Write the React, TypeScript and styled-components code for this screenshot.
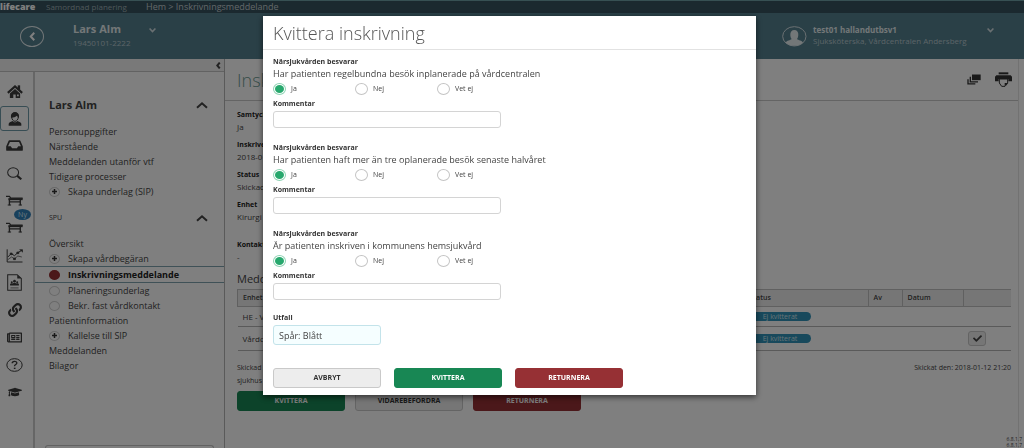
import React from "react";
import styled, { createGlobalStyle, css } from "styled-components";
import { FaLink, FaRegNewspaper, FaGraduationCap, FaCheck } from "react-icons/fa";

const GlobalStyle = createGlobalStyle`
  *, *::before, *::after { box-sizing: border-box; }
  body {
    margin: 0;
    background: #fff;
    color: #444;
    font-family: "Open Sans", "Noto Sans", sans-serif;
    font-size: 8px;
    line-height: 12px;
  }
  button, input { font: inherit; color: inherit; }
  a { color: inherit; text-decoration: none; }
  ul, h1, h2, p, dl, dd { margin: 0; padding: 0; list-style: none; }
`;

const Page = styled.div`
  min-height: 100vh;
  display: flex;
  flex-direction: column;
`;

const TopBar = styled.div`
  display: flex;
  align-items: center;
  height: 13px;
  border-top: 1px solid #6fa0a6;
  background: #36525e;
  color: #c4ced2;
  overflow: hidden;
`;

const Logo = styled.strong`
  width: 46px;
  color: #fff;
  font-size: 9px;
  font-weight: 800;
`;

const Product = styled.span`
  width: 100px;
  color: #9fb0b6;
`;

const Breadcrumb = styled.span`
  font-size: 9px;
`;

const Header = styled.header`
  display: flex;
  align-items: center;
  height: 46px;
  padding: 0 30px 0 20px;
  background: #54808f;
  color: #d5e0e4;
`;

const BackButton = styled.button`
  display: grid;
  place-items: center;
  width: 24px;
  height: 21px;
  margin-right: 29px;
  padding: 0;
  border: 1px solid #e6eef0;
  border-radius: 50%;
  background: none;
  color: #fff;
`;

const Identity = styled.div<{ $large?: boolean }>`
  min-width: ${(p) => (p.$large ? "62px" : "160px")};
  line-height: ${(p) => (p.$large ? "14px" : "11px")};
  color: #b9c9cf;
  strong {
    display: block;
    color: #e6eef0;
    font-size: ${(p) => (p.$large ? "11px" : "8px")};
  }
`;

const HeaderToggle = styled.button`
  display: flex;
  height: 12px;
  margin: 0 0 6px 14px;
  padding: 0;
  border: 0;
  background: none;
  color: #d5e0e4;
`;

const UserBlock = styled.div`
  display: flex;
  align-items: center;
  margin-left: auto;
  > svg { margin-right: 6px; }
  ${Identity} { margin-top: -3px; }
`;

const Body = styled.div`
  flex: 1;
  display: flex;
`;

const SidePanel = styled.aside`
  display: flex;
  flex-direction: column;
  width: 225px;
  border-right: 1px solid #b5b5b5;
`;

const CollapseBar = styled.div`
  display: flex;
  justify-content: flex-end;
  align-items: center;
  height: 13px;
  padding-right: 3px;
  border-bottom: 1px solid #c4c4c4;
  background: #f2f2f2;
`;

const PlainButton = styled.button`
  display: flex;
  padding: 0;
  border: 0;
  background: none;
`;

const SideColumns = styled.div`
  flex: 1;
  display: flex;
`;

const Rail = styled.ul`
  width: 35px;
  padding-top: 6px !important;
  border-right: 2px solid #cdcdcd;
`;

const RailItem = styled.li<{ $active?: boolean }>`
  position: relative;
  height: 27px;
  padding: 1px 0;
  &:nth-child(3n) { margin-bottom: 1px; }
  a {
    display: grid;
    place-items: center;
    width: 29px;
    height: 25px;
    border: 1px solid transparent;
    border-radius: 3px;
    color: #3c3c3c;
    ${(p) => p.$active && css`border-color: #6f9aa8;`}
  }
`;

const NewBadge = styled.span`
  position: absolute;
  top: -5px;
  left: 14px;
  width: 17px;
  border-radius: 50%;
  background: #3080b8;
  color: #dceefa;
  font-size: 7px;
  line-height: 11px;
  text-align: center;
`;

const Nav = styled.nav`
  flex: 1;
  display: flex;
  flex-direction: column;
  padding-top: 24px;
  font-size: 9px;
`;

const NavHeading = styled.div<{ $minor?: boolean }>`
  display: flex;
  align-items: center;
  justify-content: space-between;
  height: 18px;
  margin: ${(p) => (p.$minor ? "10px 16px 9px 14px" : "0 16px 10px 14px")};
  font-size: ${(p) => (p.$minor ? "7px" : "11px")};
  h2 { font-size: inherit; font-weight: ${(p) => (p.$minor ? 400 : 700)}; }
`;

const NavLink = styled.a<{ $active?: boolean }>`
  display: flex;
  align-items: center;
  height: 15px;
  padding-left: 14px;
  ${(p) =>
    p.$active &&
    css`
      height: 17px;
      border: solid #7fa2ae;
      border-width: 1px 0;
      font-weight: 700;
      color: #222;
    `}
`;

const Marker = styled.span<{ $kind: "add" | "done" | "empty" }>`
  display: grid;
  place-items: center;
  width: 11px;
  height: 10px;
  margin-right: 8px;
  border: 1px solid ${(p) => (p.$kind === "done" ? "#963034" : "#d2d2d2")};
  border-radius: 50%;
  background: ${(p) => (p.$kind === "done" ? "#963034" : "none")};
`;

const SideBox = styled.div`
  height: 3px;
  margin: auto 10px 0;
  border: 1px solid #c4c4c4;
  border-bottom: 0;
  border-radius: 3px 3px 0 0;
`;

const Main = styled.main`
  flex: 1;
  display: flex;
  flex-direction: column;
  margin-right: 5px;
  border-right: 1px solid #e4e4e4;
`;

const TitleRow = styled.div`
  display: flex;
  align-items: center;
  height: 42px;
  padding: 0 6px 0 12px;
  border-bottom: 1px solid #c8c8c8;
  h1 {
    flex: 1;
    color: #6d9a92;
    font-size: 18px;
    font-weight: 300;
  }
`;

const Tools = styled.div`
  display: flex;
  align-items: center;
  gap: 14px;
  color: #333;
`;

const Content = styled.div`
  padding: 8px 7px 0 12px;
`;

const Facts = styled.dl`
  dt { font-weight: 700; color: #222; font-size: 7px; }
  dd { height: 18px; }
  dd.spaced { height: 28px; }
`;

const SectionTitle = styled.h2`
  margin: 2px 0;
  font-size: 11px;
  font-weight: 400;
  line-height: 16px;
`;

const Table = styled.table`
  width: 100%;
  table-layout: fixed;
  border-collapse: collapse;
  font-size: 8px;
  th {
    height: 17px;
    padding: 0 5px;
    border: solid #c0c0c0;
    border-width: 1px 0 1px 1px;
    background: #ededed;
    font-size: 7px;
    font-weight: 600;
    text-align: left;
  }
  td {
    padding: 0 5px;
    border-bottom: 1px solid #b5b5b5;
    white-space: nowrap;
  }
`;

const Row = styled.tr<{ $tall?: boolean }>`
  height: ${(p) => (p.$tall ? 24 : 20)}px;
`;

const Pill = styled.span`
  display: block;
  width: 62px;
  border-radius: 5px;
  background: #3092b8;
  color: #cfe6ee;
  font-size: 7px;
  line-height: 9px;
  text-align: center;
`;

const CheckButton = styled.button`
  display: grid;
  place-items: center;
  width: 18px;
  height: 15px;
  padding: 0;
  border: 1px solid #c8c8c8;
  border-radius: 3px;
  background: #ededed;
`;

const SentNote = styled.div`
  display: flex;
  justify-content: space-between;
  margin: 10px 0 4px;
  font-size: 7px;
  line-height: 13px;
  p:first-child { width: 80px; }
`;

const Actions = styled.div<{ $gap: number }>`
  display: flex;
  gap: ${(p) => p.$gap}px;
`;

const tones = {
  neutral: css`background: #ededed; border-color: #c9c9c9; color: #333;`,
  green: css`background: #188754; border-color: #188754; color: #fff;`,
  red: css`background: #963034; border-color: #963034; color: #fff;`,
};

const Button = styled.button<{ $tone: keyof typeof tones }>`
  width: 108px;
  height: 20px;
  padding: 0;
  border: 1px solid;
  border-radius: 3px;
  font-size: 7px;
  font-weight: 700;
  ${(p) => tones[p.$tone]}
`;

const Version = styled.p`
  margin-top: auto !important;
  margin-right: -4px !important;
  font-size: 5px;
  line-height: 6px;
  text-align: right;
`;

const Overlay = styled.div`
  position: fixed;
  inset: 0;
  display: flex;
  justify-content: center;
  align-items: flex-start;
  padding: 16px 5px 0 0;
  background: rgba(0, 0, 0, 0.5);
`;

const Dialog = styled.div`
  width: 493px;
  background: #fff;
  box-shadow: 0 2px 6px rgba(0, 0, 0, 0.6);
`;

const DialogTitle = styled.h1`
  padding: 0 10px;
  border-bottom: 1px solid #e2e2e2;
  color: #555;
  font-size: 18px;
  font-weight: 300;
  line-height: 34px;
  height: 34px;
`;

const DialogBody = styled.form`
  padding: 6px 10px 7px;
`;

const Question = styled.fieldset`
  min-width: 0;
  margin: 0;
  padding: 0;
  border: 0;
  font-size: 9px;
  legend { padding: 0; }
  & + & { margin-top: 14px; }
`;

const boldLabel = css`
  display: block;
  color: #333;
  font-size: 7px;
  font-weight: 700;
  line-height: 12px;
`;

const Legend = styled.legend`${boldLabel}`;
const FieldLabel = styled.label`${boldLabel}`;

const Options = styled.div`
  display: flex;
  height: 18px;
`;

const Option = styled.label`
  display: flex;
  align-items: center;
  width: 82px;
  font-size: 7px;
`;

const Radio = styled.input`
  appearance: none;
  display: grid;
  place-items: center;
  width: 13px;
  height: 12px;
  margin: 0 5px 0 0;
  border: 1px solid #c4c4c4;
  border-radius: 50%;
  background: #fff;
  &:checked { border-color: #8fd3b4; }
  &:checked::before {
    content: "";
    width: 9px;
    height: 8px;
    border-radius: 50%;
    background: #27a86d;
  }
`;

const TextField = styled.input<{ $result?: boolean }>`
  display: block;
  width: ${(p) => (p.$result ? 108 : 228)}px;
  height: ${(p) => (p.$result ? 20 : 17)}px;
  margin-top: 1px;
  padding: 0 5px;
  border: 1px solid ${(p) => (p.$result ? "#c3e3ea" : "#d4d4d4")};
  border-radius: 3px;
  background: ${(p) => (p.$result ? "#f5feff" : "#fff")};
  font-size: 9px;
`;

const ResultBlock = styled.div`
  margin: 12px 0 23px;
`;

const Chevron = ({ dir, w, h, stroke = 1.6 }: { dir: "up" | "down" | "left"; w: number; h: number; stroke?: number }) => {
  const d = { up: "M1 9 L6 3 L11 9", down: "M1 3 L6 9 L11 3", left: "M9 1 L3 6 L9 11" }[dir];
  return (
    <svg width={w} height={h} viewBox="0 0 12 12" preserveAspectRatio="none" aria-hidden="true">
      <path d={d} fill="none" stroke="currentColor" strokeWidth={stroke} vectorEffect="non-scaling-stroke" />
    </svg>
  );
};

const HomeIcon = () => (
  <svg width="16" height="13" viewBox="0 0 46 38" fill="currentColor">
    <path d="M31 1h7v13h-7z" />
    <path d="M2 23 23 4l21 19" fill="none" stroke="currentColor" strokeWidth="6" />
    <path d="M8 25 23 12l15 13v13H25V28h-7v10H8z" />
    <path d="M29 28h5v5h-5z" fill="#fff" />
  </svg>
);

const PersonIcon = () => (
  <svg width="14" height="14" viewBox="0 0 42 42">
    <path d="M2 41v-6c1-5 8-6 12-8 3 5 11 5 14 0 4 2 11 3 12 8v6z" fill="currentColor" />
    <path d="M11 14c0-7 4-12 10-12s10 5 10 12c0 8-5 14-10 14s-10-6-10-14z" fill="none" stroke="currentColor" strokeWidth="3" />
    <path d="M9 17C8 6 13 1 21 1s13 5 12 16c-3-1-5-4-6-6-4 3-10 6-18 6z" fill="currentColor" />
  </svg>
);

const InboxIcon = () => (
  <svg width="17" height="11" viewBox="0 0 50 32">
    <path d="M10 3h30l7 16v10H3V19z" fill="none" stroke="currentColor" strokeWidth="5" strokeLinejoin="round" />
    <path d="M3 18h11l4 6h14l4-6h11v11H3z" fill="currentColor" />
  </svg>
);

const SearchIcon = () => (
  <svg width="15" height="13" viewBox="0 0 44 38" fill="none" stroke="currentColor">
    <ellipse cx="18" cy="16" rx="16" ry="14" strokeWidth="3" />
    <path d="m30 26 12 10" strokeWidth="6" />
  </svg>
);

const BedIcon = () => (
  <svg width="17" height="11" viewBox="0 0 50 32" fill="none" stroke="currentColor">
    <path d="M0 4h10l4 5h35" strokeWidth="4" />
    <path d="M7 12h42" strokeWidth="6" />
    <path d="M10 13v17M42 13v17M10 20h32" strokeWidth="4" />
    <path d="M5 29h10M37 29h10" strokeWidth="3" />
  </svg>
);

const ChartIcon = () => (
  <svg width="17" height="14" viewBox="0 0 50 42" fill="none" stroke="currentColor">
    <path d="M3 1v38h46" strokeWidth="3" />
    <path d="m5 24 10-10 10 6 10-9 12-7" strokeWidth="3" />
    <path d="m5 32 11-8 9 5 10-8 12 3" strokeWidth="2" />
    <path d="M40 2h9v8M12 12h6v5h-6zM32 9h6v5h-6zM22 27h6v5h-6z" strokeWidth="2" fill="currentColor" />
  </svg>
);

const ReportIcon = () => (
  <svg width="15" height="17" viewBox="0 0 44 50">
    <path d="M2 2h28l12 11v35H2z" fill="none" stroke="currentColor" strokeWidth="3" />
    <g fill="currentColor">
      <path d="M30 2v11h12z" />
      <circle cx="22" cy="21" r="4" />
      <circle cx="14" cy="24" r="3" />
      <circle cx="30" cy="24" r="3" />
      <path d="M9 34v-4c1-3 6-3 8-2 2-3 8-3 10 0 2-1 7-1 8 2v4z" />
      <path d="M10 40h24v2H10z" />
    </g>
  </svg>
);

const HelpIcon = () => (
  <svg width="17" height="14" viewBox="0 0 50 42" fill="none" stroke="currentColor">
    <ellipse cx="25" cy="21" rx="23" ry="19" strokeWidth="3" />
    <path d="M18 16c0-7 14-8 14-1 0 5-7 4-7 10" strokeWidth="4" />
    <path d="M23 29h5v4h-5z" fill="currentColor" stroke="none" />
  </svg>
);

const AvatarIcon = () => (
  <svg width="25" height="21" viewBox="0 0 75 63">
    <ellipse cx="37" cy="31" rx="35" ry="29" fill="none" stroke="#d5e0e4" strokeWidth="3" />
    <path d="M11 50c3-7 14-7 18-11-5-5-8-27 8-27s13 22 8 27c4 4 15 4 18 11-12 12-40 12-52 0z" fill="#e6eef0" />
  </svg>
);

const StackIcon = () => (
  <svg width="14" height="11" viewBox="0 0 42 32" fill="currentColor">
    <path d="M15 1h26v17H15z" />
    <path d="M10 8v15h23M3 15v14h22" fill="none" stroke="currentColor" strokeWidth="4" />
  </svg>
);

const PrinterIcon = () => (
  <svg width="17" height="15" viewBox="0 0 51 45">
    <g fill="currentColor">
      <path d="M11 1h29v6H11z" />
      <path d="M4 10h43l4 4v14H40v-7H11v7H0V14z" />
    </g>
    <path d="M13 21h25v13l-8 9H20l-7-10z" fill="#fff" stroke="currentColor" strokeWidth="3" />
    <path d="M38 33H29v10z" fill="currentColor" />
  </svg>
);

const PlusMark = () => (
  <svg width="5" height="5" viewBox="0 0 10 10">
    <path d="M0 5h10M5 0v10" stroke="#333" strokeWidth="3" />
  </svg>
);

const railItems: { label: string; icon: React.ReactNode; active?: boolean; badge?: string }[] = [
  { label: "Hem", icon: <HomeIcon /> },
  { label: "Patient", icon: <PersonIcon />, active: true },
  { label: "Inkorg", icon: <InboxIcon /> },
  { label: "Sök", icon: <SearchIcon /> },
  { label: "Vårdplatser", icon: <BedIcon /> },
  { label: "Nya vårdplatser", icon: <BedIcon />, badge: "Ny" },
  { label: "Statistik", icon: <ChartIcon /> },
  { label: "Rapporter", icon: <ReportIcon /> },
  { label: "Länkar", icon: <FaLink size={14} /> },
  { label: "Nyheter", icon: <FaRegNewspaper size={15} /> },
  { label: "Hjälp", icon: <HelpIcon /> },
  { label: "Utbildning", icon: <FaGraduationCap size={14} /> },
];

type NavEntry = { text: string; kind?: "add" | "done" | "empty"; active?: boolean };

const patientLinks: NavEntry[] = [
  { text: "Personuppgifter" },
  { text: "Närstående" },
  { text: "Meddelanden utanför vtf" },
  { text: "Tidigare processer" },
  { text: "Skapa underlag (SIP)", kind: "add" },
];

const spuLinks: NavEntry[] = [
  { text: "Översikt" },
  { text: "Skapa vårdbegäran", kind: "add" },
  { text: "Inskrivningsmeddelande", kind: "done", active: true },
  { text: "Planeringsunderlag", kind: "empty" },
  { text: "Bekr. fast vårdkontakt", kind: "empty" },
  { text: "Patientinformation" },
  { text: "Kallelse till SIP", kind: "add" },
  { text: "Meddelanden" },
  { text: "Bilagor" },
];

const NavList = ({ entries }: { entries: NavEntry[] }) => (
  <ul>
    {entries.map((e) => (
      <li key={e.text}>
        <NavLink href="#" $active={e.active}>
          {e.kind && <Marker $kind={e.kind}>{e.kind === "add" && <PlusMark />}</Marker>}
          {e.text}
        </NavLink>
      </li>
    ))}
  </ul>
);

const questions = [
  "Har patienten regelbundna besök inplanerade på vårdcentralen",
  "Har patienten haft mer än tre oplanerade besök senaste halvåret",
  "Är patienten inskriven i kommunens hemsjukvård",
];

const QuestionFields = ({ text, index }: { text: string; index: number }) => (
  <Question>
    <Legend>Närsjukvården besvarar</Legend>
    <p>{text}</p>
    <Options>
      {["Ja", "Nej", "Vet ej"].map((o, i) => (
        <Option key={o}>
          <Radio type="radio" name={`answer${index}`} defaultChecked={i === 0} />
          {o}
        </Option>
      ))}
    </Options>
    <FieldLabel htmlFor={`comment${index}`}>Kommentar</FieldLabel>
    <TextField id={`comment${index}`} type="text" />
  </Question>
);

export default function App() {
  return (
    <>
      <GlobalStyle />
      <Page>
        <TopBar>
          <Logo>lifecare</Logo>
          <Product>Samordnad planering</Product>
          <Breadcrumb>Hem &gt; Inskrivningsmeddelande</Breadcrumb>
        </TopBar>
        <Header>
          <BackButton aria-label="Tillbaka"><Chevron dir="left" w={7} h={9} stroke={2} /></BackButton>
          <Identity $large>
            <strong>Lars Alm</strong>
            19450101-2222
          </Identity>
          <HeaderToggle aria-label="Patientmeny"><Chevron dir="down" w={7} h={6} /></HeaderToggle>
          <UserBlock>
            <AvatarIcon />
            <Identity>
              <strong>test01 hallandutbsv1</strong>
              Sjuksköterska, Vårdcentralen Andersberg
            </Identity>
            <HeaderToggle aria-label="Användarmeny"><Chevron dir="down" w={7} h={6} /></HeaderToggle>
          </UserBlock>
        </Header>
        <Body>
          <SidePanel>
            <CollapseBar>
              <PlainButton aria-label="Dölj meny"><Chevron dir="left" w={5} h={7} stroke={2} /></PlainButton>
            </CollapseBar>
            <SideColumns>
              <Rail>
                {railItems.map((r) => (
                  <RailItem key={r.label} $active={r.active}>
                    <a href="#" aria-label={r.label}>{r.icon}</a>
                    {r.badge && <NewBadge>{r.badge}</NewBadge>}
                  </RailItem>
                ))}
              </Rail>
              <Nav>
                <NavHeading>
                  <h2>Lars Alm</h2>
                  <PlainButton aria-label="Fäll ihop"><Chevron dir="up" w={12} h={9} stroke={2} /></PlainButton>
                </NavHeading>
                <NavList entries={patientLinks} />
                <NavHeading $minor>
                  <h2>SPU</h2>
                  <PlainButton aria-label="Fäll ihop"><Chevron dir="up" w={12} h={9} stroke={2} /></PlainButton>
                </NavHeading>
                <NavList entries={spuLinks} />
                <SideBox />
              </Nav>
            </SideColumns>
          </SidePanel>
          <Main>
            <TitleRow>
              <h1>Inskrivningsmeddelande</h1>
              <Tools>
                <PlainButton aria-label="Visa historik"><StackIcon /></PlainButton>
                <PlainButton aria-label="Skriv ut"><PrinterIcon /></PlainButton>
              </Tools>
            </TitleRow>
            <Content>
              <Facts>
                <dt>Samtycke</dt>
                <dd>Ja</dd>
                <dt>Inskriven</dt>
                <dd>2018-01</dd>
                <dt>Status</dt>
                <dd>Skickad</dd>
                <dt>Enhet</dt>
                <dd className="spaced">Kirurgi</dd>
                <dt>Kontakt</dt>
                <dd>-</dd>
              </Facts>
              <SectionTitle>Meddelande</SectionTitle>
              <Table>
                <colgroup>
                  <col />
                  <col width={124} />
                  <col width={34} />
                  <col width={61} />
                  <col width={48} />
                </colgroup>
                <thead>
                  <tr>
                    <th>Enhet</th>
                    <th>Status</th>
                    <th>Av</th>
                    <th>Datum</th>
                    <th aria-label="Åtgärd" />
                  </tr>
                </thead>
                <tbody>
                  <Row>
                    <td>HE - VC</td>
                    <td><Pill>Ej kvitterat</Pill></td>
                    <td /><td /><td />
                  </Row>
                  <Row $tall>
                    <td>Vårdcentral</td>
                    <td><Pill>Ej kvitterat</Pill></td>
                    <td /><td />
                    <td><CheckButton aria-label="Kvittera"><FaCheck size={9} /></CheckButton></td>
                  </Row>
                </tbody>
              </Table>
              <SentNote>
                <p>Skickad av: Hallands sjukhus</p>
                <p>Skickat den: 2018-01-12 21:20</p>
              </SentNote>
              <Actions $gap={10}>
                <Button $tone="green">KVITTERA</Button>
                <Button $tone="neutral">VIDAREBEFORDRA</Button>
                <Button $tone="red">RETURNERA</Button>
              </Actions>
            </Content>
            <Version>6.8.1.7<br />6.8.1.7</Version>
          </Main>
        </Body>
      </Page>
      <Overlay>
        <Dialog role="dialog" aria-modal="true" aria-labelledby="dialog-title">
          <DialogTitle id="dialog-title">Kvittera inskrivning</DialogTitle>
          <DialogBody>
            {questions.map((q, i) => <QuestionFields key={q} text={q} index={i} />)}
            <ResultBlock>
              <FieldLabel htmlFor="result">Utfall</FieldLabel>
              <TextField id="result" type="text" $result readOnly value="Spår: Blått" />
            </ResultBlock>
            <Actions $gap={13}>
              <Button type="button" $tone="neutral">AVBRYT</Button>
              <Button type="button" $tone="green">KVITTERA</Button>
              <Button type="button" $tone="red">RETURNERA</Button>
            </Actions>
          </DialogBody>
        </Dialog>
      </Overlay>
    </>
  );
}
